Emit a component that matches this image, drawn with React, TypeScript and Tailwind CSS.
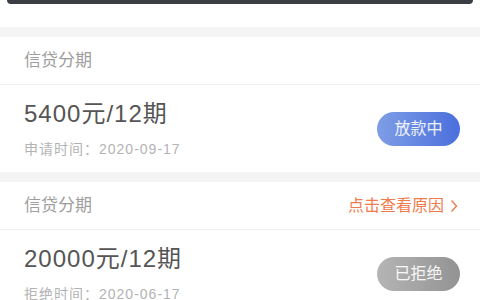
import React from 'react';

interface Loan {
  amount: string;
  dateLabel: string;
  date: string;
  status: string;
  rejected?: boolean;
}

const loans: Loan[] = [
  { amount: '5400元/12期', dateLabel: '申请时间', date: '2020-09-17', status: '放款中' },
  { amount: '20000元/12期', dateLabel: '拒绝时间', date: '2020-06-17', status: '已拒绝', rejected: true },
];

function LoanCard({ loan }: { loan: Loan }): JSX.Element {
  return (
    <div className="bg-white">
      <div className="flex h-[48px] items-center justify-between border-b border-[#f2f2f2] pl-6 pr-[22px]">
        <span className="text-[17px] text-[#9e9e9e]">信贷分期</span>
        {loan.rejected && (
          <span className="flex items-center gap-[6px] text-[16px] text-[#f07b4c]">
            点击查看原因
            <svg width="8" height="14" viewBox="0 0 8 14" fill="none">
              <path d="M1.5 1.5L6.5 7L1.5 12.5" stroke="#f07b4c" strokeWidth="1.4" />
            </svg>
          </span>
        )}
      </div>
      <div className="flex h-[87px] items-center justify-between pl-6 pr-5">
        <div className="flex flex-col">
          <span className="text-[24px] leading-[30px] tracking-[1px] text-[#555555]">{loan.amount}</span>
          <span className="mt-[11px] text-[14px] leading-[18px] tracking-[1px] text-[#b3b3b3]">
            {loan.dateLabel}：{loan.date}
          </span>
        </div>
        <div
          className={
            loan.rejected
              ? 'flex h-[34px] w-[83px] items-center justify-center rounded-full bg-gradient-to-r from-[#b5b5b5] to-[#939393] text-[16px] text-white/90'
              : 'flex h-[34px] w-[83px] items-center justify-center rounded-full bg-gradient-to-r from-[#7f9de6] to-[#4b6fdc] text-[16px] text-white/90'
          }
        >
          {loan.status}
        </div>
      </div>
    </div>
  );
}

export default function App(): JSX.Element {
  return (
    <div
      className="h-[300px] w-[480px] overflow-hidden bg-white"
      style={{ fontFamily: '"Liberation Sans", "Noto Sans CJK SC", sans-serif' }}
    >
      <div className="px-[7px]">
        <div className="h-[4px] rounded-b-[6px] bg-[#3b3e42]" />
      </div>
      <div className="h-[23px] bg-white" />
      <div className="h-[10px] bg-[#f4f4f4]" />
      <LoanCard loan={loans[0]} />
      <div className="h-[10px] bg-[#f4f4f4]" />
      <LoanCard loan={loans[1]} />
    </div>
  );
}
